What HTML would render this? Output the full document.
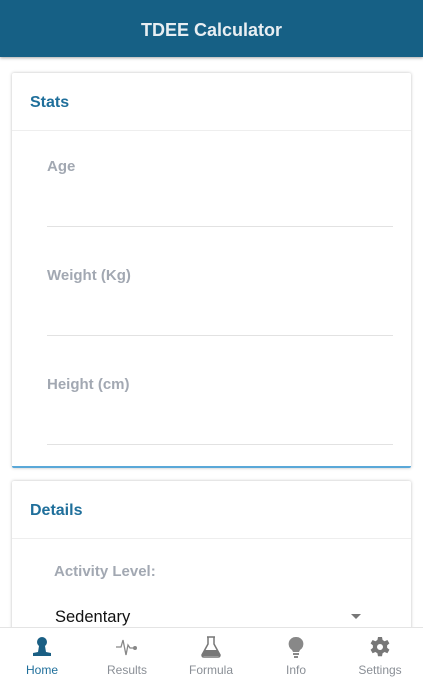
<!DOCTYPE html><html><head><style>
*{margin:0;padding:0;box-sizing:border-box}
body{width:423px;height:678px;overflow:hidden;background:#fff;font-family:"Liberation Sans",Arial,sans-serif;position:relative}
.hdr{position:absolute;left:0;top:0;width:423px;height:57px;background:#166085;color:#e8eef2;font-weight:bold;font-size:18px;text-align:center;line-height:60px;box-shadow:0 1px 3px rgba(0,0,0,.35)}
.card{position:absolute;left:12px;width:399px;background:#fff;box-shadow:0 0 3px rgba(0,0,0,.25);border-radius:2px}
.t{position:absolute;left:18px;color:#1f6f9b;font-weight:bold;font-size:16px}
.div{position:absolute;left:0;right:0;height:1px;background:#eee}
.lab{position:absolute;color:#a2a8b2;font-weight:bold;font-size:15px}
.ln{position:absolute;left:35px;width:346px;height:1px;background:#e2e2e2}
.nav{position:absolute;left:0;top:627px;width:423px;height:51px;background:#fff;border-top:1px solid #e4e4e4}
.it{position:absolute;top:0;width:80px;text-align:center;font-size:12px;color:#8a8f96}
.it svg{position:absolute;left:28px;top:7px}
.it span{position:absolute;left:0;width:80px;top:35px}
</style></head><body>
<div class="hdr">TDEE Calculator</div>
<div class="card" style="top:73px;height:395px;border-bottom:2px solid #5aa8d8">
<div class="t" style="top:21px">Stats</div>
<div class="div" style="top:57px"></div>
<div class="lab" style="left:35px;top:85px">Age</div><div class="ln" style="top:153px"></div>
<div class="lab" style="left:35px;top:194px">Weight (Kg)</div><div class="ln" style="top:262px"></div>
<div class="lab" style="left:35px;top:303px">Height (cm)</div><div class="ln" style="top:371px"></div>
</div>
<div class="card" style="top:481px;height:160px">
<div class="t" style="top:21px">Details</div>
<div class="div" style="top:57px"></div>
<div class="lab" style="left:42px;top:82px">Activity Level:</div>
<div style="position:absolute;left:43px;top:127px;font-size:16.5px;color:#111">Sedentary</div>
<div style="position:absolute;left:339px;top:133px;width:0;height:0;border-left:5px solid transparent;border-right:5px solid transparent;border-top:5px solid #777"></div>
</div>
<div class="nav">
<div class="it" style="left:2px;color:#1f6f9b"><svg width="24" height="24" viewBox="0 0 24 24"><circle cx="12" cy="7" r="5" fill="#1a5f84"/><path d="M9 11 L8 17 L3 18 L3 21 L21 21 L21 18 L16 17 L15 11Z" fill="#1a5f84"/></svg><span>Home</span></div>
<div class="it" style="left:87px"><svg width="24" height="24" viewBox="0 0 24 24"><path d="M1 12 L6 12 L8 5 L11 20 L13 10 L15 13 L19 13" stroke="#888" stroke-width="1.3" fill="none"/><circle cx="20" cy="13" r="2" fill="#888"/></svg><span>Results</span></div>
<div class="it" style="left:171px"><svg width="24" height="24" viewBox="0 0 24 24"><path d="M8 2 L16 2 M9 2 L9 9 L3 20 Q3 22 5 22 L19 22 Q21 22 21 20 L15 9 L15 2" stroke="#777" stroke-width="1.5" fill="none"/><path d="M6 15 L18 15 L21 21 L3 21Z" fill="#777"/></svg><span>Formula</span></div>
<div class="it" style="left:256px"><svg width="24" height="24" viewBox="0 0 24 24"><path d="M12 2 A7 7 0 0 1 16 15 L15 17 L9 17 L8 15 A7 7 0 0 1 12 2Z" fill="#888"/><rect x="9" y="18" width="6" height="2" fill="#888"/><rect x="10" y="21" width="4" height="2" fill="#888"/></svg><span>Info</span></div>
<div class="it" style="left:340px"><svg width="24" height="24" viewBox="0 0 24 24"><path d="M10 2h4l.6 3 2 1.2 2.8-1.2 2 3.4-2.3 2v2.4l2.3 2-2 3.4-2.8-1.2-2 1.2-.6 3h-4l-.6-3-2-1.2-2.8 1.2-2-3.4 2.3-2v-2.4l-2.3-2 2-3.4 2.8 1.2 2-1.2z" fill="#777"/><circle cx="12" cy="12" r="3" fill="#fff"/></svg><span>Settings</span></div>
</div>
</body></html>
